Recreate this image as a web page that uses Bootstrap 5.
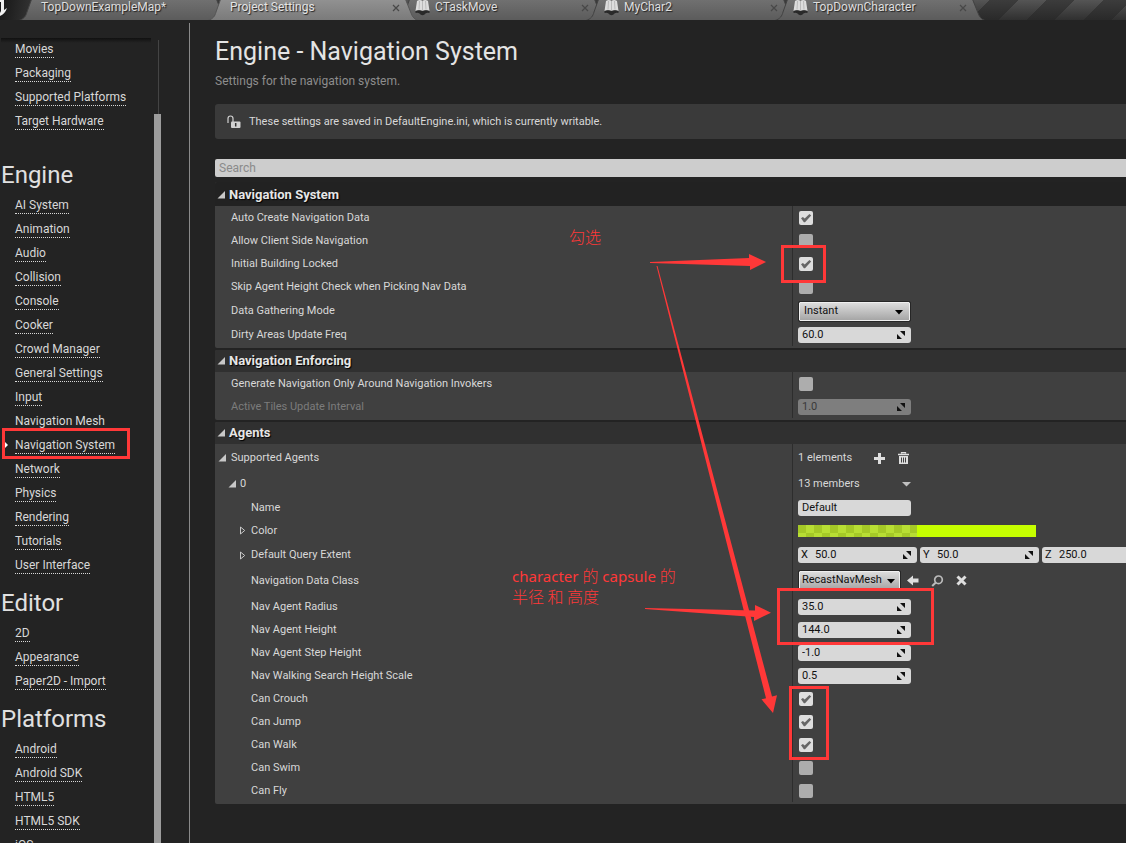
<!DOCTYPE html>
<html lang="en" data-bs-theme="dark">
<head>
<meta charset="utf-8">
<meta name="viewport" content="width=device-width, initial-scale=1">
<title>Project Settings</title>
<link href="https://cdn.jsdelivr.net/npm/bootstrap@5.3.0/dist/css/bootstrap.min.css" rel="stylesheet">
<style>
  body { background: #232323; color: #d8d8d8; font-family: Roboto, "Liberation Sans", sans-serif; font-size: 11px; line-height: 16px; }
  a { color: inherit; text-decoration: none; }

  /* document tabs */
  .tabstrip { height: 20px; flex: none; overflow: hidden;
    background: linear-gradient(rgba(35,35,35,0), rgba(35,35,35,.75)), repeating-linear-gradient(135deg, #555 0 20px, #3c3c3c 20px 40px); }
  .app-mark { width: 40px; flex: none; background: linear-gradient(100deg, #161616, #3c3c3c); }
  .doc-tab { position: relative; z-index: 1; width: 210px; height: 20px; flex: none; margin-left: -21px; padding: 0 18px 0 22px; gap: 5px;
    font-size: 12px; line-height: 14px; color: #dedede; text-shadow: 1px 1px 1px #222; }
  .doc-tab .tab-shape { position: absolute; left: 0; top: 0; z-index: -1; fill: url(#tg); stroke: #424242; }
  .doc-tab.with-icon { padding-left: 18px; }
  .doc-tab.active { z-index: 3; color: #e4e4e4; }
  .doc-tab.active .tab-shape { fill: url(#ta); stroke: #555; }
  .tab-close { border: 0; padding: 0; background: none; width: 8px; line-height: 0; height: 8px; margin-top: 4px; }

  /* category navigation */
  .sidebar { width: 190px; flex: none; }
  .sidebar-edge { width: 1px; background: #8a8a8a; margin-top: 3px; }
  .side-scroll { height: 100%; padding-top: 18px; overflow: hidden; }
  .side-shade { left: 1px; top: 18px; width: 150px; height: 5px; background: linear-gradient(#111, rgba(35,35,35,0)); }
  .side-title { font-size: 24px; line-height: 38px; font-weight: 400; margin: 6px 0 0; padding-left: 1px; color: #e0e0e0; }
  .side-title.first { margin-top: 22px; }
  .side-item { height: 24px; padding: 4px 0 0 15px; position: relative; }
  .side-item a { display: inline-block; font-size: 12px; line-height: 15px; border-bottom: 1px dotted #d8d8d8; color: #d8d8d8; }
  .track { width: 8px; left: 154px; top: 20px; bottom: 0; }
  .track-line { width: 1px; height: 74px; margin: 0 3px 0 4px; background: #444; }
  .track-thumb { background: #9c9c9c; width: 7px; }
  .side-mark { left: 2px; top: -6px; width: 128px; height: 31px; border: 3px solid #ff3838; }
  .side-arrow { left: 5px; top: 7px; }

  /* settings pane */
  .pane { min-width: 0; padding: 20px 0 0 25px; overflow: hidden; }
  .page-title { font-size: 25px; line-height: 32px; margin: -4px 0 0; font-weight: 400; color: #e4e4e4; }
  .page-hint { font-size: 12px; line-height: 16px; color: #8d8d8d; margin: 5px 0 0; }
  .notice { height: 35px; margin-top: 15px; background: #3a3a3a; border-radius: 3px 0 0 3px; padding-left: 12px; gap: 8px; }
  .search { display: block; width: 100%; height: 18px; margin-top: 20px; border: 0; border-radius: 2px 0 0 2px; background: #cdcdcd; color: #222; font-size: 12px; padding: 0 4px; }
  .search::placeholder { color: #8a8a8a; opacity: 1; }
  .group { background: #404040; padding-bottom: 2px; margin-bottom: 2px; border-radius: 2px 0 0 2px; overflow: hidden; }
  .group-head { height: 22px; width: 100%; border: 0; padding: 0 0 0 2px; gap: 4px; background: #303030; color: #e6e6e6;
    font-size: 13px; line-height: 16px; font-weight: 700; text-shadow: 1px 1px 1px #000; text-align: left; }
  .group-head.dim { height: 24px; padding-top: 2px; background: #222; }
  .prop { display: grid; grid-template-columns: minmax(0, 577fr) minmax(0, 334fr); height: 23px; }
  .prop.h24 { height: 24px; }
  .prop.h26 { height: 26px; }
  .prop.h29 { height: 29px; }
  .prop-name { padding-left: 16px; display: flex; align-items: center; }
  .prop-name.sub { padding-left: 36px; }
  .prop-name.tree { padding-left: 3px; gap: 5px; }
  .prop-name.node { padding-left: 13px; gap: 4px; }
  .prop-name.leaf { padding-left: 24px; gap: 5px; }
  .prop-name.off { color: #7c7c7c; }
  .prop-value { border-left: 1px solid #2d2d2d; padding-left: 5px; display: flex; align-items: center; overflow: hidden; }
  .h24 > *, .h26 > * { padding-top: 2px; }
  .tick { appearance: none; width: 14px; height: 14px; margin: 1px 0 0 1px; border-radius: 2px; background: #adadad; }
  .tick:checked { background: #dedede url("data:image/svg+xml,%3Csvg xmlns='http://www.w3.org/2000/svg' viewBox='0 0 14 14'%3E%3Cpath d='M2 7.2 3.9 5.9 5.7 7.6 10.4 3 12.2 4.6 6 11.2 4.9 11.2Z' fill='%23666'/%3E%3C/svg%3E"); }
  .field { position: relative; width: 113px; flex: none; height: 16px; }
  .field input { display: block; width: 100%; height: 16px; border: 0; border-radius: 3px; padding: 0 16px 1px 4px; background: #d8d8d8; color: #111; font-size: 11px; line-height: 15px; }
  .field svg { position: absolute; right: 6px; top: 4px; }
  .field input:disabled { background: #7e7e7e; color: #3a3a3a; }
  .axis { width: 119px; margin-right: 3px; }
  .axis label { position: absolute; left: 3px; top: 0; line-height: 15px; color: #111; }
  .axis input { padding-left: 17px; }
  .picker { width: 111px; height: 19px; margin-left: 1px; padding: 0 0 1px 4px; border: 1px solid #efefef; border-radius: 1px; outline: 1px solid #262626; outline-offset: 0; color: #111; font-size: 11px; line-height: 16px; appearance: none;
    background: url("data:image/svg+xml,%3Csvg xmlns='http://www.w3.org/2000/svg' width='8' height='5'%3E%3Cpath d='M0 0h8L4 4.5z' fill='%23000'/%3E%3C/svg%3E") no-repeat right 6px top 7px, linear-gradient(#dcdcdc, #a6a6a6); }
  .picker.mesh { width: 101px; padding-left: 2px; background-position: right 4px top 7px, 0 0; }
  .tool { border: 0; padding: 0; background: none; line-height: 0; flex: none; color: #dedede; }
  .swatch { width: 238px; height: 12px; flex: none; margin-top: 1px; border: 0; padding: 0; display: flex; background: none; }
  .swatch-alpha { width: 50%; height: 12px; background: repeating-conic-gradient(#b8de34 0 25%, #a5c927 0 50%) 0 0 / 16px 16px; }
  .swatch-solid { width: 50%; height: 12px; background: #c6ff00; }

  /* notes drawn over the pane */
  .notes { left: 0; top: 0; z-index: 10; pointer-events: none; }
  .notes text { font-family: "Noto Sans", "Noto Sans CJK SC", sans-serif; font-size: 15px; fill: #ff3838; }
  .notes .han { font-family: "Noto Sans CJK SC", sans-serif; font-size: 16px; font-weight: 300; }
</style>
</head>
<body>
<svg class="position-absolute" width="0" height="0">
  <symbol id="open" viewBox="0 0 8 8"><path d="M8 0V7.500H.5Z" fill="#c8c8c8"/></symbol>
  <symbol id="closed" viewBox="0 0 6 9"><path d="M1 1 5.200 4.500 1 8Z" fill="none" stroke="#c8c8c8"/></symbol>
  <symbol id="spin" viewBox="0 0 9 8"><path d="M4 0H9V5Z M1 3V8H6Z" fill="#111"/></symbol>
  <symbol id="cross" viewBox="0 0 8 8"><path d="M1 1 7 7M7 1 1 7" stroke="#484848" stroke-width="1.200"/></symbol>
  <symbol id="book" viewBox="0 0 15 16"><path d="M2 1Q5-1 7.500 1Q10-1 13 1L14.500 11Q11 9.500 7.500 11Q4 9.500 .5 11Z" fill="#ddd"/><path d="M7.500 1V11M4.500 1 4 9.500M10.500 1 11 9.500" stroke="#aaa" stroke-width=".7"/><path d="M.5 11Q4 9.500 7.500 11Q11 9.500 14.500 11V13Q11 12 9.500 14.500Q7.500 16 5.500 14.500Q4 12 .5 13Z" fill="#292929"/></symbol>
  <linearGradient id="tg" x2="0" y2="1"><stop stop-color="#727272"/><stop offset="1" stop-color="#5b5b5b"/></linearGradient>
  <linearGradient id="ta" x2="0" y2="1"><stop stop-color="#939393"/><stop offset="1" stop-color="#7a7a7a"/></linearGradient>
  <symbol id="shape" viewBox="0 0 210 20"><path d="M0 20.500C5 19 7 16 8 12L13-2H197L203 13Q205 19 210 20.500Z"/></symbol>
</svg>

<div class="vh-100 d-flex flex-column overflow-hidden position-relative">
  <header class="tabstrip d-flex">
    <div class="app-mark"><svg width="8" height="20"><path d="M0 0H4V10L7 8Q5 14 0 16V13L1 11V2H0Z" fill="#eee"/></svg></div>
    <div class="doc-tab d-flex"><svg class="tab-shape" width="210" height="20"><use href="#shape"/></svg><span class="flex-grow-1">TopDownExampleMap*</span></div>
    <div class="doc-tab d-flex active"><svg class="tab-shape" width="210" height="20"><use href="#shape"/></svg><span class="flex-grow-1">Project Settings</span><button class="tab-close" aria-label="Close"><svg width="8" height="8"><use href="#cross"/></svg></button></div>
    <div class="doc-tab d-flex with-icon"><svg class="tab-shape" width="210" height="20"><use href="#shape"/></svg><svg width="15" height="16"><use href="#book"/></svg><span class="flex-grow-1">CTaskMove</span><button class="tab-close" aria-label="Close"><svg width="8" height="8"><use href="#cross"/></svg></button></div>
    <div class="doc-tab d-flex with-icon"><svg class="tab-shape" width="210" height="20"><use href="#shape"/></svg><svg width="15" height="16"><use href="#book"/></svg><span class="flex-grow-1">MyChar2</span><button class="tab-close" aria-label="Close"><svg width="8" height="8"><use href="#cross"/></svg></button></div>
    <div class="doc-tab d-flex with-icon"><svg class="tab-shape" width="210" height="20"><use href="#shape"/></svg><svg width="15" height="16"><use href="#book"/></svg><span class="flex-grow-1">TopDownCharacter</span><button class="tab-close" aria-label="Close"><svg width="8" height="8"><use href="#cross"/></svg></button></div>
  </header>

  <div class="d-flex flex-grow-1" style="min-height:0">
    <nav class="sidebar d-flex position-relative">
      <div class="side-scroll flex-grow-1">
        <div class="side-item"><a href="#">Movies</a></div>
        <div class="side-item"><a href="#">Packaging</a></div>
        <div class="side-item"><a href="#">Supported Platforms</a></div>
        <div class="side-item"><a href="#">Target Hardware</a></div>
        <h2 class="side-title first">Engine</h2>
        <div class="side-item"><a href="#">AI System</a></div>
        <div class="side-item"><a href="#">Animation</a></div>
        <div class="side-item"><a href="#">Audio</a></div>
        <div class="side-item"><a href="#">Collision</a></div>
        <div class="side-item"><a href="#">Console</a></div>
        <div class="side-item"><a href="#">Cooker</a></div>
        <div class="side-item"><a href="#">Crowd Manager</a></div>
        <div class="side-item"><a href="#">General Settings</a></div>
        <div class="side-item"><a href="#">Input</a></div>
        <div class="side-item"><a href="#">Navigation Mesh</a></div>
        <div class="side-item"><svg class="side-arrow position-absolute" width="3" height="8"><path d="M0 1 3 4 0 7Z" fill="#fff"/></svg><a href="#">Navigation System</a><span class="side-mark position-absolute"></span></div>
        <div class="side-item"><a href="#">Network</a></div>
        <div class="side-item"><a href="#">Physics</a></div>
        <div class="side-item"><a href="#">Rendering</a></div>
        <div class="side-item"><a href="#">Tutorials</a></div>
        <div class="side-item"><a href="#">User Interface</a></div>
        <h2 class="side-title">Editor</h2>
        <div class="side-item"><a href="#">2D</a></div>
        <div class="side-item"><a href="#">Appearance</a></div>
        <div class="side-item"><a href="#">Paper2D - Import</a></div>
        <h2 class="side-title">Platforms</h2>
        <div class="side-item"><a href="#">Android</a></div>
        <div class="side-item"><a href="#">Android SDK</a></div>
        <div class="side-item"><a href="#">HTML5</a></div>
        <div class="side-item"><a href="#">HTML5 SDK</a></div>
        <div class="side-item"><a href="#">iOS</a></div>
      </div>
      <div class="side-shade position-absolute"></div>
      <div class="track position-absolute d-flex flex-column"><div class="track-line"></div><div class="track-thumb flex-grow-1"></div></div>
      <div class="sidebar-edge"></div>
    </nav>

    <main class="pane flex-grow-1">
      <h1 class="page-title">Engine - Navigation System</h1>
      <p class="page-hint">Settings for the navigation system.</p>
      <div class="notice d-flex align-items-center">
        <svg width="14" height="14"><path d="M1 8V3.500Q1 1 3.500 1Q6 1 6 3.500V7" fill="none" stroke="#d0d0d0" stroke-width="1.200"/><rect x="4" y="6.500" width="9.500" height="6.500" rx="1" fill="#d0d0d0"/><path d="M8.700 8V11.500" stroke="#333" stroke-width="1.500"/></svg>
        <span>These settings are saved in DefaultEngine.ini, which is currently writable.</span>
      </div>
      <input class="search" type="search" placeholder="Search" aria-label="Search">

      <section class="group" style="margin-top:5px">
        <button class="group-head dim d-flex align-items-center"><svg width="8" height="8"><use href="#open"/></svg>Navigation System</button>
        <div class="prop"><label class="prop-name" for="p1">Auto Create Navigation Data</label><div class="prop-value"><input class="tick" type="checkbox" id="p1" checked></div></div>
        <div class="prop"><label class="prop-name" for="p2">Allow Client Side Navigation</label><div class="prop-value"><input class="tick" type="checkbox" id="p2"></div></div>
        <div class="prop"><label class="prop-name" for="p3">Initial Building Locked</label><div class="prop-value"><input class="tick" type="checkbox" id="p3" checked></div></div>
        <div class="prop"><label class="prop-name" for="p4">Skip Agent Height Check when Picking Nav Data</label><div class="prop-value"><input class="tick" type="checkbox" id="p4"></div></div>
        <div class="prop h24"><label class="prop-name" for="p5">Data Gathering Mode</label><div class="prop-value"><select class="picker" id="p5"><option>Instant</option></select></div></div>
        <div class="prop h24"><label class="prop-name" for="p6">Dirty Areas Update Freq</label><div class="prop-value"><div class="field"><input id="p6" value="60.0"><svg width="9" height="8"><use href="#spin"/></svg></div></div></div>
      </section>

      <section class="group">
        <button class="group-head d-flex align-items-center"><svg width="8" height="8"><use href="#open"/></svg>Navigation Enforcing</button>
        <div class="prop"><label class="prop-name" for="p7">Generate Navigation Only Around Navigation Invokers</label><div class="prop-value"><input class="tick" type="checkbox" id="p7"></div></div>
        <div class="prop"><label class="prop-name off" for="p8">Active Tiles Update Interval</label><div class="prop-value"><div class="field"><input id="p8" value="1.0" disabled><svg width="9" height="8"><use href="#spin"/></svg></div></div></div>
      </section>

      <section class="group">
        <button class="group-head d-flex align-items-center"><svg width="8" height="8"><use href="#open"/></svg>Agents</button>
        <div class="prop h26"><div class="prop-name tree"><svg width="8" height="8"><use href="#open"/></svg>Supported Agents</div>
          <div class="prop-value"><span>1 elements</span>
            <button class="tool" style="margin-left:22px" aria-label="Add"><svg width="11" height="11"><path d="M4 0H7V4H11V7H7V11H4V7H0V4H4Z" fill="currentColor"/></svg></button>
            <button class="tool" style="margin-left:13px" aria-label="Empty"><svg width="11" height="12"><path d="M3.500 1.500V.5H7.500V1.500M0 2.500H11" stroke="currentColor" stroke-width="1.300" fill="none"/><path d="M1 4H10V12H1Z" fill="currentColor"/><path d="M3.500 5.500V10.500M5.500 5.500V10.500M7.500 5.500V10.500" stroke="#404040"/></svg></button></div></div>
        <div class="prop h26"><div class="prop-name node"><svg width="8" height="8"><use href="#open"/></svg>0</div>
          <div class="prop-value"><span>13 members</span><button class="tool" style="margin-left:42px" aria-label="Entry menu"><svg width="9" height="5"><path d="M0 0H9L4.500 4.500Z" fill="#c0c0c0"/></svg></button></div></div>
        <div class="prop"><label class="prop-name sub" for="a1">Name</label><div class="prop-value"><div class="field"><input id="a1" value="Default"></div></div></div>
        <div class="prop"><div class="prop-name leaf"><svg width="7" height="9"><use href="#closed"/></svg>Color</div><div class="prop-value"><button class="swatch" aria-label="Color"><span class="swatch-alpha"></span><span class="swatch-solid"></span></button></div></div>
        <div class="prop h24"><div class="prop-name leaf"><svg width="7" height="9"><use href="#closed"/></svg>Default Query Extent</div>
          <div class="prop-value">
            <div class="field axis"><label for="ax">X</label><input id="ax" value="50.0"><svg width="9" height="8"><use href="#spin"/></svg></div>
            <div class="field axis"><label for="ay">Y</label><input id="ay" value="50.0"><svg width="9" height="8"><use href="#spin"/></svg></div>
            <div class="field axis"><label for="az">Z</label><input id="az" value="250.0"><svg width="9" height="8"><use href="#spin"/></svg></div>
          </div></div>
        <div class="prop h29"><label class="prop-name sub" for="a4">Navigation Data Class</label>
          <div class="prop-value"><select class="picker mesh" id="a4"><option>RecastNavMesh</option></select>
            <button class="tool" style="margin-left:7px" aria-label="Use selected"><svg width="12" height="11"><path d="M0 5.500 6 .5V3.500H11.500V7.500H6V10.500Z" fill="currentColor"/></svg></button>
            <button class="tool" style="margin-left:12px" aria-label="Browse"><svg width="13" height="12"><circle cx="7.500" cy="4.800" r="3.800" fill="none" stroke="#bbb" stroke-width="1.700"/><path d="M4.800 7.500 1.200 11" stroke="#bbb" stroke-width="2"/></svg></button>
            <button class="tool" style="margin-left:12px" aria-label="Clear"><svg width="11" height="11"><path d="M1.500 1.500 9.500 9.500M9.500 1.500 1.500 9.500" stroke="currentColor" stroke-width="3"/></svg></button></div></div>
        <div class="prop"><label class="prop-name sub" for="a5">Nav Agent Radius</label><div class="prop-value"><div class="field"><input id="a5" value="35.0"><svg width="9" height="8"><use href="#spin"/></svg></div></div></div>
        <div class="prop"><label class="prop-name sub" for="a6">Nav Agent Height</label><div class="prop-value"><div class="field"><input id="a6" value="144.0"><svg width="9" height="8"><use href="#spin"/></svg></div></div></div>
        <div class="prop"><label class="prop-name sub" for="a7">Nav Agent Step Height</label><div class="prop-value"><div class="field"><input id="a7" value="-1.0"><svg width="9" height="8"><use href="#spin"/></svg></div></div></div>
        <div class="prop"><label class="prop-name sub" for="a8">Nav Walking Search Height Scale</label><div class="prop-value"><div class="field"><input id="a8" value="0.5"><svg width="9" height="8"><use href="#spin"/></svg></div></div></div>
        <div class="prop"><label class="prop-name sub" for="a9">Can Crouch</label><div class="prop-value"><input class="tick" type="checkbox" id="a9" checked></div></div>
        <div class="prop"><label class="prop-name sub" for="a10">Can Jump</label><div class="prop-value"><input class="tick" type="checkbox" id="a10" checked></div></div>
        <div class="prop"><label class="prop-name sub" for="a11">Can Walk</label><div class="prop-value"><input class="tick" type="checkbox" id="a11" checked></div></div>
        <div class="prop"><label class="prop-name sub" for="a12">Can Swim</label><div class="prop-value"><input class="tick" type="checkbox" id="a12"></div></div>
        <div class="prop"><label class="prop-name sub" for="a13">Can Fly</label><div class="prop-value"><input class="tick" type="checkbox" id="a13"></div></div>
      </section>
    </main>
  </div>

  <svg class="notes position-absolute" width="940" height="780">
    <g fill="none" stroke="#ff3838" stroke-width="3">
      <rect x="782.5" y="246.500" width="42" height="35"/>
      <rect x="778.500" y="589.500" width="154" height="54"/>
      <rect x="790.500" y="687.500" width="37" height="71"/>
    </g>
    <g fill="#ff3838">
      <path d="M650 262 749 258V254L766 262 750 270V266L650 263Z"/>
      <path d="M656.500 266H657.500L772 696.500 777 695.300 773 713 761.500 699.300 766 698.300Z"/>
      <path d="M645 608 755 610.500V605L771 612.700 754 621V617L645 609Z"/>
    </g>
    <text class="han" x="569" y="243">勾选</text>
    <text x="512" y="582">character <tspan class="han">的</tspan> capsule <tspan class="han">的</tspan></text>
    <text class="han" x="512" y="603">半径 和 高度</text>
  </svg>
</div>
<script src="https://cdn.jsdelivr.net/npm/bootstrap@5.3.0/dist/js/bootstrap.bundle.min.js"></script>
</body>
</html>
